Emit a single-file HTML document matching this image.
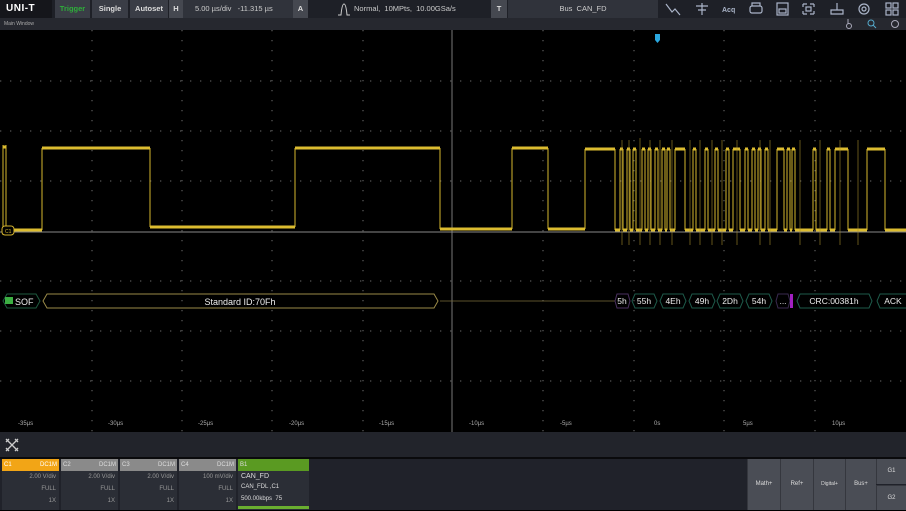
<!DOCTYPE html>
<html><head><meta charset="utf-8"><style>
*{margin:0;padding:0;box-sizing:border-box}
body{width:906px;height:510px;background:#000;font-family:"Liberation Sans",sans-serif;overflow:hidden;position:relative;color:#ccc}
.a{position:absolute}
.top{left:0;top:0;width:906px;height:18px;background:#1e2027}
.btn{background:#3a3d46;color:#ddd;font-size:7.5px;font-weight:bold;text-align:center;line-height:18px;top:0;height:18px}
.fld{background:#30333b;color:#ccc;font-size:7.5px;line-height:18px;top:0;height:18px}
.mw{left:0;top:18px;width:906px;height:12px;background:#26282f;font-size:5px;color:#aaa;line-height:12px;padding-left:4px}
.tl{font-size:6px;color:#aaa;top:421px}
.bar{left:0;top:432px;width:906px;height:25px;background:#22242b}
.sep{left:0;top:457px;width:906px;height:2px;background:#0a0a0c}
.panel{left:0;top:459px;width:906px;height:51px;background:#20222a}
.ch{top:459px;width:57px;height:51px;background:#2b2e36;font-size:6px;color:#999;text-align:right}
.ch .h{height:12px;background:#8a8a8a;color:#ddd;line-height:12px;padding:0 2px;display:flex;justify-content:space-between}
.ch div.r{height:12px;line-height:13px;padding-right:3px}
.rb{top:459px;height:51px;background:#4a4d55;color:#ddd;font-size:6px;text-align:center;line-height:51px;border-left:1px solid #35373e}
</style></head><body>
<div class="a top"></div>
<div class="a" style="left:0;top:0;width:52px;height:18px;background:#15161b;color:#fff;font-weight:bold;font-size:10px;line-height:18px;padding-left:6px;letter-spacing:0.5px">UNI-T</div>
<div class="a btn" style="left:55px;width:35px;color:#2eae3a;background:#3a3d46">Trigger</div>
<div class="a btn" style="left:92px;width:36px">Single</div>
<div class="a btn" style="left:130px;width:38px">Autoset</div>
<div class="a btn" style="left:169px;width:14px;background:#454850">H</div>
<div class="a fld" style="left:183px;width:110px;padding-left:12px">5.00 µs/div &nbsp; -11.315 µs</div>
<div class="a btn" style="left:293px;width:15px;background:#454850">A</div>
<div class="a fld" style="left:308px;width:182px;padding-left:46px;background:#1e2027">Normal, &nbsp;10MPts, &nbsp;10.00GSa/s</div>
<svg class="a" style="left:337px;top:3px" width="14" height="13"><path d="M1 12 H4 Q5 1 7 1 Q9 1 10 12 H13" fill="none" stroke="#ccc" stroke-width="1"/></svg>
<div class="a btn" style="left:491px;width:16px;background:#454850">T</div>
<div class="a fld" style="left:508px;width:150px;text-align:center;background:#30333b">Bus &nbsp;CAN_FD</div>
<svg class="a" style="left:660px;top:0" width="246" height="18" fill="none" stroke="#aab4c8" stroke-width="1.2">
<path d="M6 4 L12 12 L15 9 L20 15"/>
<path d="M36 6 H48 M38 10 H46 M42 3 V15"/>
<text x="62" y="12" fill="#aab4c8" stroke="none" font-size="7" font-weight="bold">Acq</text>
<rect x="90" y="6" width="12" height="7" rx="2"/><path d="M92 6 V3 H100 V6"/>
<rect x="117" y="3" width="11" height="12"/><rect x="119" y="9" width="7" height="4"/>
<path d="M143 4 H147 M150 4 H154 M143 14 H147 M150 14 H154 M143 4 V7 M154 4 V7 M143 11 V14 M154 11 V14"/><rect x="146" y="7" width="5" height="4"/>
<path d="M171 14 H183 V10 H171 Z M177 10 V3"/>
<circle cx="204" cy="9" r="5"/><circle cx="204" cy="9" r="2"/>
<rect x="226" y="3" width="5" height="5"/><rect x="233" y="3" width="5" height="5"/><rect x="226" y="10" width="5" height="5"/><rect x="233" y="10" width="5" height="5"/>
</svg>
<div class="a mw">Main Window</div>
<svg class="a" style="left:840px;top:18px" width="66" height="12" fill="none" stroke="#aab" stroke-width="1">
<circle cx="9" cy="8" r="2.5"/><path d="M8 1 V6"/>
<circle cx="31" cy="5" r="3" stroke="#5ac"/><path d="M33 7 L36 10" stroke="#5ac"/>
<circle cx="55" cy="6" r="3.5"/>
</svg>
<svg class="a" style="left:0;top:30px" width="906" height="402">
<g stroke="#555" stroke-width="1.3" stroke-dasharray="1.3 8.7">
<path d="M92 0V402M182 0V402M272 0V402M363 0V402M543 0V402M634 0V402M724 0V402M815 0V402"/>
<path d="M0 51H906M0 101H906M0 151H906M0 251H906M0 301H906M0 351H906"/>
</g>
<path d="M452 0V402" stroke="#777" stroke-width="1"/>
<path d="M0 202H906" stroke="#888" stroke-width="1"/>
<path d="M655 4 h5 v6 l-2.5 3 l-2.5 -3 z" fill="#2aa8e0"/>
<g stroke="#d6b82e" stroke-width="1" fill="none">
<path d="M3 115 V205 M6 115 V200 M42 118 V200 M150 118 V197 M295 118 V197 M440 118 V199 M512 118 V199 M548 118 V199 M585 119 V199 M615 119 V200"/>
<path d="M620 119V200M623 119V200M627 119V200M630 119V200M633 119V200M636 119V200M642 119V200M645 119V200M648 119V200M651 119V200M655 119V200M658 119V200M662 119V200M665 119V200M667 119V200M670 119V200M675 119V200M685 119V200M693 119V200M696 119V200M705 119V200M708 119V200M715 119V200M718 119V200M726 119V200M729 119V200M733 119V200M740 119V200M745 119V200M748 119V200M752 119V200M755 119V200M758 119V200M761 119V200M765 119V200M768 119V200M777 119V200M784 119V200M787 119V200M790 119V200M792 119V200M795 119V200M813 119V200M816 119V200M827 119V200M830 119V200M835 119V200M848 119V200M867 119V200M885 119V200"/>
</g>
<g stroke="#dcbc30" stroke-width="3" fill="none">
<path d="M3 117 H6 M6 200 H42 M42 118 H150 M150 197 H295 M295 118 H440 M440 199 H512 M512 118 H548 M548 199 H585 M585 119 H615 M615 200 H620 M675 119 H685 M777 119 H784 M835 119 H848 M867 119 H885 M885 200 H906 M848 200 H867 M795 200 H813"/>
<path d="M620 119h3M627 119h3M633 119h3M642 119h3M648 119h3M655 119h3M662 119h3M667 119h3M693 119h3M705 119h3M715 119h3M726 119h3M733 119h7M745 119h3M752 119h3M758 119h3M765 119h3M787 119h3M792 119h3M813 119h3M827 119h3"/>
<path d="M623 200h4M630 200h3M636 200h6M645 200h3M651 200h4M658 200h4M665 200h2M670 200h5M685 200h8M696 200h9M708 200h7M718 200h8M729 200h4M740 200h5M748 200h4M755 200h3M761 200h4M768 200h9M784 200h3M790 200h2M816 200h11M830 200h5"/>
</g>
<g stroke="#b09530" stroke-width="0.8" opacity="0.7">
<path d="M622 110V215M629 110V215M640 108V215M650 110V215M660 110V215M672 110V215M690 110V215M700 110V215M712 110V215M722 110V215M737 110V215M760 110V215M770 110V215M800 110V215M820 110V215M840 110V215M858 110V215"/>
</g>
<rect x="2" y="196" width="12" height="9" rx="3" fill="#000" stroke="#d4b32c"/>
<text x="5" y="203" font-size="5" fill="#d4b32c">C1</text>
<path d="M440 271 H615" stroke="#7a6e3a" stroke-width="0.8"/>
<path d="M3 271 l4 -7 H36 l4 7 l-4 7 H7 z" fill="none" stroke="#1e5a3e"/>
<rect x="5" y="267" width="8" height="7" fill="#3cb043"/>
<text x="15" y="275" font-size="9" fill="#eee" font-family="Liberation Sans">SOF</text>
<path d="M43 271 l4 -7 H434 l4 7 l-4 7 H47 z" fill="none" stroke="#9a8a48"/>
<text x="240" y="275" font-size="9" fill="#eee" text-anchor="middle">Standard ID:70Fh</text>
<g fill="none" stroke="#1e5a4a">
<path d="M615 271 l2 -7 H628 l2 7 l-2 7 H617 z" stroke="#4a3060"/>
<path d="M632 271 l3 -7 H654 l3 7 l-3 7 H635 z"/>
<path d="M660 271 l3 -7 H683 l3 7 l-3 7 H663 z"/>
<path d="M689 271 l3 -7 H712 l3 7 l-3 7 H692 z"/>
<path d="M717 271 l3 -7 H740 l3 7 l-3 7 H720 z"/>
<path d="M746 271 l3 -7 H769 l3 7 l-3 7 H749 z"/>
<path d="M776 271 l2 -7 H788 l2 7 l-2 7 H778 z" stroke="#3a2a50"/>
<path d="M797 271 l3 -7 H869 l3 7 l-3 7 H800 z"/>
<path d="M877 271 l3 -7 H906 M877 271 l3 7 H906"/>
</g>
<rect x="790" y="264" width="3" height="14" fill="#a020c0"/>
<g font-size="8.5" fill="#eee" text-anchor="middle">
<text x="622" y="274">5h</text><text x="644" y="274">55h</text><text x="673" y="274">4Eh</text><text x="702" y="274">49h</text><text x="730" y="274">2Dh</text><text x="759" y="274">54h</text><text x="783" y="274">...</text><text x="834" y="274">CRC:00381h</text><text x="893" y="274">ACK</text>
</g>
</svg>
<div class="a tl" style="left:18px">-35µs</div>
<div class="a tl" style="left:108px">-30µs</div>
<div class="a tl" style="left:198px">-25µs</div>
<div class="a tl" style="left:289px">-20µs</div>
<div class="a tl" style="left:379px">-15µs</div>
<div class="a tl" style="left:469px">-10µs</div>
<div class="a tl" style="left:560px">-5µs</div>
<div class="a tl" style="left:654px">0s</div>
<div class="a tl" style="left:743px">5µs</div>
<div class="a tl" style="left:832px">10µs</div>
<div class="a bar"></div>
<svg class="a" style="left:4px;top:437px" width="16" height="16" fill="none" stroke="#ccc" stroke-width="1.3"><path d="M2 2 L14 14 M14 2 L2 14 M2 5 L5 2 M11 2 L14 5 M2 11 L5 14 M11 14 L14 11"/></svg>
<div class="a sep"></div>
<div class="a panel"></div>
<div class="a ch" style="left:2px"><div class="h" style="background:#f2a516;color:#fff"><span>C1</span><span>DC1M</span></div><div class="r">2.00 V/div</div><div class="r">FULL</div><div class="r">1X</div></div>
<div class="a ch" style="left:61px"><div class="h"><span>C2</span><span>DC1M</span></div><div class="r">2.00 V/div</div><div class="r">FULL</div><div class="r">1X</div></div>
<div class="a ch" style="left:120px"><div class="h"><span>C3</span><span>DC1M</span></div><div class="r">2.00 V/div</div><div class="r">FULL</div><div class="r">1X</div></div>
<div class="a ch" style="left:179px"><div class="h"><span>C4</span><span>DC1M</span></div><div class="r">100 mV/div</div><div class="r">FULL</div><div class="r">1X</div></div>
<div class="a ch" style="left:238px;width:71px;text-align:left;color:#ddd"><div class="h" style="background:#5a9a22"><span>B1</span><span></span></div><div style="padding-left:3px;font-size:7px;line-height:11px">CAN_FD</div><div style="padding-left:3px;line-height:11px">CAN_FDL ,C1</div><div style="padding-left:3px;line-height:12px">500.00kbps &nbsp;75</div><div style="height:3px;background:#6aae30;margin-top:1px"></div></div>
<div class="a rb" style="left:747px;width:33px">Math+</div>
<div class="a rb" style="left:780px;width:33px">Ref+</div>
<div class="a rb" style="left:813px;width:32px;font-size:5px">Digital+</div>
<div class="a rb" style="left:845px;width:31px">Bus+</div>
<div class="a rb" style="left:876px;width:30px;height:25px;line-height:25px">G1</div>
<div class="a rb" style="left:876px;top:485px;width:30px;height:25px;line-height:25px;border-top:1px solid #35373e">G2</div>
</body></html>
